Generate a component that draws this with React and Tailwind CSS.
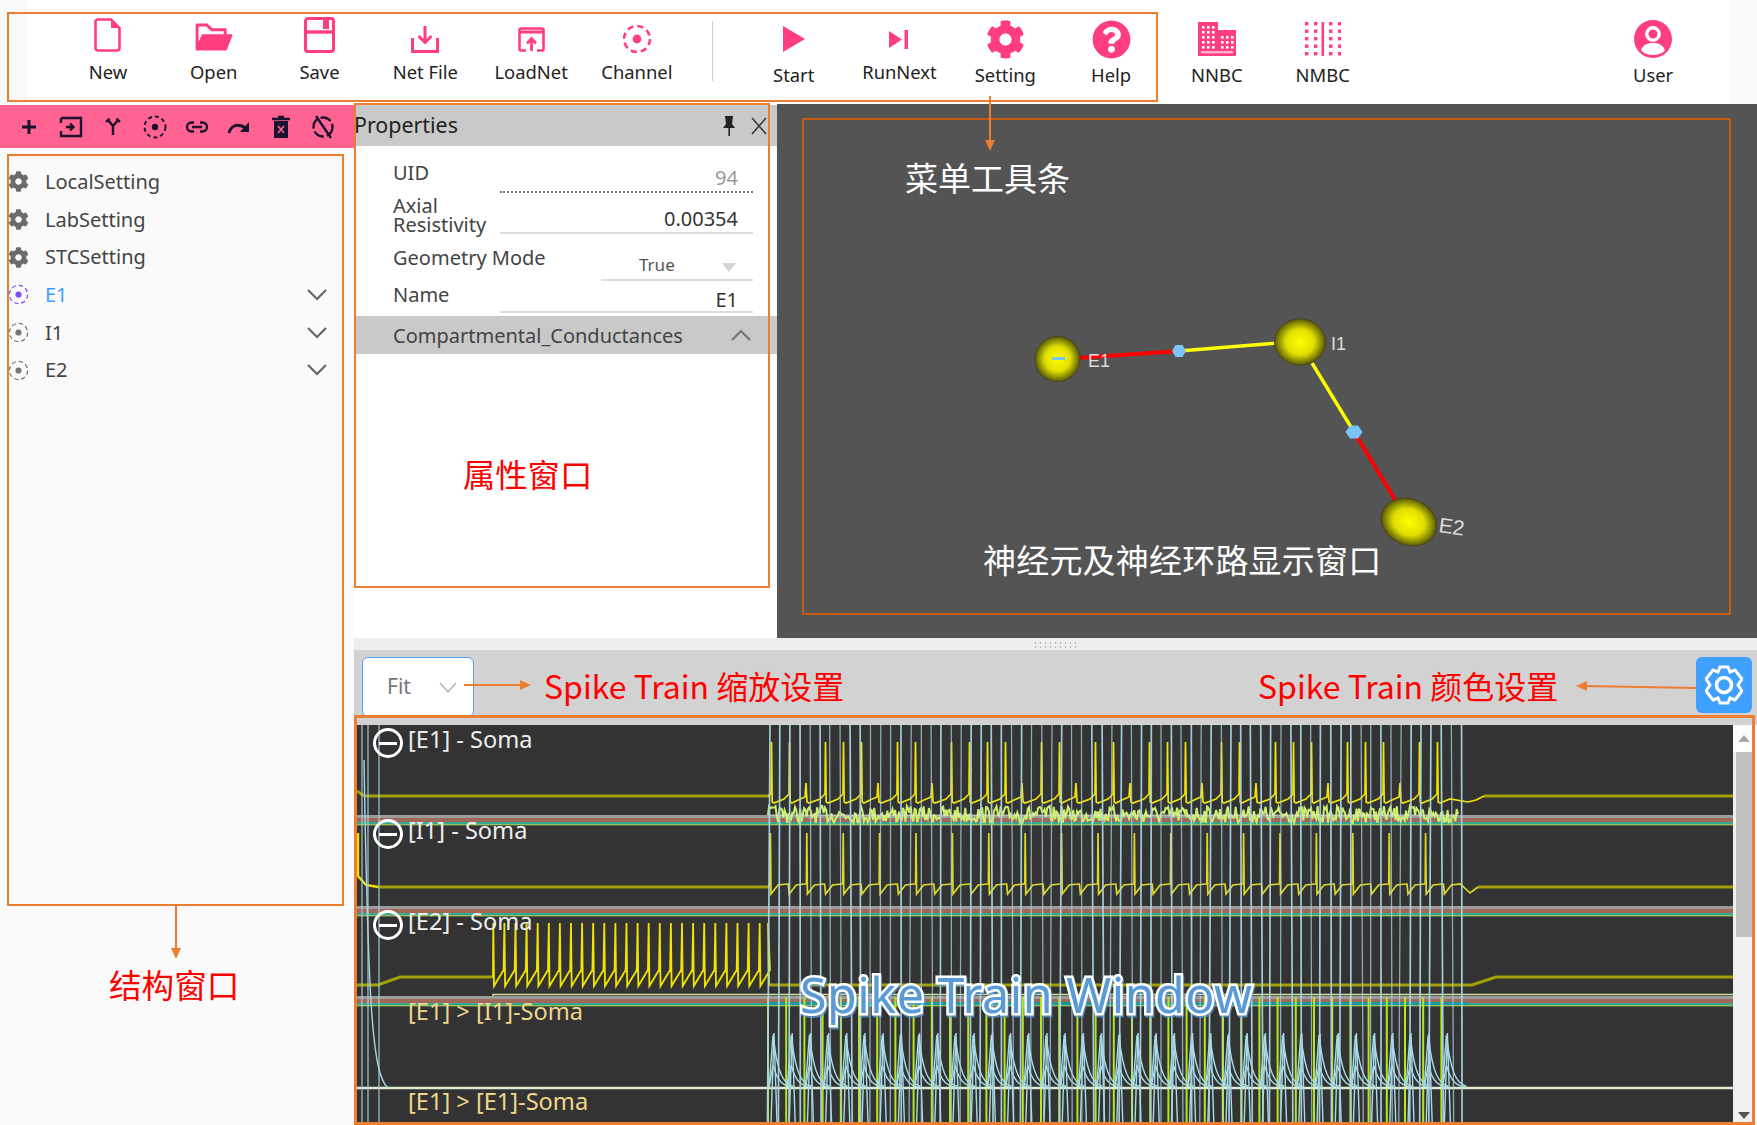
import React from "react";
import { AiFillFolderOpen } from "react-icons/ai";
import { FaCog, FaQuestionCircle } from "react-icons/fa";

const ui = "[font-family:'Noto_Sans','Noto_Sans_CJK_SC',sans-serif]";
const cjk = "[font-family:'Noto_Sans_CJK_SC',sans-serif]";

// seeded so the picture is the same on every load
let seed = 7;
const rand = () => (seed = (seed * 16807) % 2147483647) / 2147483647;

const PINK = "#ff3d80";

const DashedTarget = ({ size = 30, color = PINK, sw = 2.6 }) => (
  <svg width={size} height={size} viewBox="0 0 30 30">
    <circle cx="15" cy="15" r="13" fill="none" stroke={color} strokeWidth={sw} strokeDasharray="6.2 4" />
    <circle cx="15" cy="15" r="4.4" fill={color} />
  </svg>
);

const NewIcon = () => (
  <svg width="27" height="34" viewBox="0 0 27 34">
    <path d="M3.5 1.5H17L25.5 10V30a2.5 2.5 0 0 1-2.5 2.5H4A2.5 2.5 0 0 1 1.5 30V3.5a2 2 0 0 1 2-2z" fill="none" stroke={PINK} strokeWidth="2.6" />
    <path d="M17 1.5V10H25.5Z" fill={PINK} />
  </svg>
);

const SaveIcon = () => (
  <svg width="31" height="36" viewBox="0 0 31 36">
    <path d="M4 1.5H27a2.5 2.5 0 0 1 2.5 2.5V32a2.5 2.5 0 0 1-2.5 2.5H4A2.5 2.5 0 0 1 1.5 32V4A2.5 2.5 0 0 1 4 1.5z" fill="none" stroke={PINK} strokeWidth="3" />
    <path d="M2 15H29" stroke={PINK} strokeWidth="3.4" />
    <path d="M19 2H25V12H19Z" fill={PINK} />
  </svg>
);

const NetFileIcon = () => (
  <svg width="28" height="27" viewBox="0 0 28 27">
    <path d="M14 0V16M7.5 10L14 16.5L20.5 10" fill="none" stroke={PINK} strokeWidth="3" />
    <path d="M1.5 12V25.5H26.5V12" fill="none" stroke={PINK} strokeWidth="3" />
  </svg>
);

const LoadNetIcon = () => (
  <svg width="27" height="25" viewBox="0 0 27 25">
    <path d="M8 23.5H3A1.5 1.5 0 0 1 1.5 22V2.5A1.5 1.5 0 0 1 3 1.5H24A1.5 1.5 0 0 1 25.5 2.5V22A1.5 1.5 0 0 1 24 23.5H19" fill="none" stroke={PINK} strokeWidth="2.6" />
    <path d="M1.5 5H25.5" stroke={PINK} strokeWidth="3" />
    <path d="M13.5 24V12M9 16.5L13.5 11.5L18 16.5" fill="none" stroke={PINK} strokeWidth="2.8" />
  </svg>
);

const StartIcon = () => (
  <svg width="22" height="26" viewBox="0 0 22 26"><path d="M0 0L22 13L0 26Z" fill={PINK} /></svg>
);

const RunNextIcon = () => (
  <svg width="20" height="19" viewBox="0 0 20 19">
    <path d="M0 1L13 9.5L0 18Z" fill={PINK} />
    <path d="M15.5 0H19V19H15.5Z" fill={PINK} />
  </svg>
);

const NnbcIcon = () => (
  <svg width="38" height="34" viewBox="0 0 38 34">
    <path d="M0 0H20V8H38V34H0Z" fill={PINK} />
    {[4, 9, 14, 19, 24].flatMap((y) =>
      [4, 9, 14].map((x) => <rect key={`a${x}${y}`} x={x} y={y} width="2.6" height="2.6" fill="#fff" />)
    )}
    {[14, 19, 24].flatMap((y) =>
      [23, 28, 33].map((x) => <rect key={`b${x}${y}`} x={x} y={y} width="2.6" height="2.6" fill="#fff" />)
    )}
    <rect x="3" y="29" width="32" height="2.4" fill="#fff" opacity="0.6" />
  </svg>
);

const NmbcIcon = () => (
  <svg width="36" height="34" viewBox="0 0 36 34">
    {[0, 7.5, 15, 22.5, 30].flatMap((y) =>
      [0, 9, 24, 33].map((x) => <rect key={`${x}-${y}`} x={x} y={y} width="3.4" height="3.4" fill={PINK} />)
    )}
    <rect x="16.5" y="0" width="2.6" height="34" fill={PINK} />
  </svg>
);

const UserIcon = () => (
  <svg width="38" height="38" viewBox="0 0 38 38">
    <circle cx="19" cy="19" r="19" fill={PINK} />
    <circle cx="19" cy="14" r="6.2" fill="none" stroke="#fff" strokeWidth="3.4" />
    <path d="M7 30.5C9.5 24 14 23 19 23S28.5 24 31 30.5C27.5 34 23 35 19 35S10.5 34 7 30.5Z" fill="#fff" />
  </svg>
);

const mainTools = [
  { label: "New", icon: <NewIcon />, iconClass: "-translate-y-1", labelClass: "-mt-1" },
  { label: "Open", icon: <AiFillFolderOpen size={42} color={PINK} />, iconClass: "-translate-y-0.5", labelClass: "-mt-1" },
  { label: "Save", icon: <SaveIcon />, iconClass: "-translate-y-1", labelClass: "-mt-1" },
  { label: "Net File", icon: <NetFileIcon />, labelClass: "-mt-1" },
  { label: "LoadNet", icon: <LoadNetIcon />, labelClass: "-mt-1" },
  { label: "Channel", icon: <DashedTarget />, labelClass: "-mt-1" },
];

const runTools = [
  { label: "Start", icon: <StartIcon /> },
  { label: "RunNext", icon: <RunNextIcon />, labelClass: "-mt-1" },
  { label: "Setting", icon: <FaCog size={39} color={PINK} /> },
  { label: "Help", icon: <FaQuestionCircle size={39} color={PINK} /> },
  { label: "NNBC", icon: <NnbcIcon /> },
  { label: "NMBC", icon: <NmbcIcon /> },
];

const ToolButton = ({ label, icon, iconClass = "", labelClass = "-mt-px" }) => (
  <div className="flex w-[105.8px] flex-col items-center pt-[14px]">
    <div className={`flex h-[50px] items-center justify-center ${iconClass}`}>{icon}</div>
    <span className={`text-[18.4px] leading-6 text-[#222] ${labelClass}`}>{label}</span>
  </div>
);

const Ink = ({ children }) => (
  <svg width="26" height="26" viewBox="0 0 26 26" fill="none" stroke="#1a1230" strokeWidth="2.4">
    {children}
  </svg>
);

const sideTools = [
  <Ink key="add"><path d="M13 6V20M6 13H20" strokeWidth="3" /></Ink>,
  <Ink key="in"><path d="M3 4H23V22H3V17M3 9V4M8 13H15M12 9.5L15.5 13L12 16.5" /></Ink>,
  <Ink key="fork"><path d="M13 21V12L8 6M13 12L18 6M6 8L9.5 4.5M20 8L16.5 4.5" /></Ink>,
  <Ink key="target"><circle cx="13" cy="13" r="10.5" strokeWidth="1.9" strokeDasharray="4 3" /><circle cx="13" cy="13" r="3.2" fill="#1a1230" stroke="none" /></Ink>,
  <Ink key="link"><path d="M10 8.5H7.5a4.5 4.5 0 0 0 0 9H10M16 8.5H18.5a4.5 4.5 0 0 1 0 9H16M8 13H18" /></Ink>,
  <Ink key="redo"><path d="M3 19C5 11 12 9 20 14" strokeWidth="2.8" /><path d="M23 8V18H14Z" fill="#1a1230" stroke="none" /></Ink>,
  <Ink key="trash"><path d="M6 7H20V24H6Z" fill="#1a1230" stroke="none" /><path d="M4 5H22M10 3H16" /><path d="M10 12L16 19M16 12L10 19" stroke="#ff6392" strokeWidth="1.6" /></Ink>,
  <Ink key="off"><circle cx="13" cy="13" r="9.5" strokeDasharray="11 3" /><path d="M6 2L21 24" /></Ink>,
];

const Chevron = ({ up = false, color = "#666" }) => (
  <svg width="20" height="12" viewBox="0 0 20 12" fill="none" stroke={color} strokeWidth="2.2">
    <path d={up ? "M1 11L10 2L19 11" : "M1 1L10 10L19 1"} />
  </svg>
);

const treeItems = [
  { name: "LocalSetting", kind: "gear" },
  { name: "LabSetting", kind: "gear" },
  { name: "STCSetting", kind: "gear" },
  { name: "E1", kind: "node", active: true },
  { name: "I1", kind: "node" },
  { name: "E2", kind: "node" },
];

const Sidebar = () => (
  <aside className="flex w-[354px] shrink-0 flex-col bg-[#fafafa]">
    <div className="mt-px flex h-[43px] items-center gap-4 bg-[#ff6392] pl-4">
      {sideTools}
    </div>
    <ul className="pt-[15px]">
      {treeItems.map((item) => (
        <li key={item.name} className="flex h-[37.7px] items-center pr-[27px] pl-[7px]">
          <span className="flex w-[23px] justify-center">
            {item.kind === "gear" ? (
              <FaCog size={21} color="#6b6b6b" />
            ) : (
              <DashedTarget size={21} sw={1.8} color={item.active ? "#7c4dff" : "#777"} />
            )}
          </span>
          <span className={`ml-[15px] text-[20px] ${item.active ? "text-[#3fa0ff]" : "text-[#444]"}`}>{item.name}</span>
          {item.kind === "node" && (
            <span className="ml-auto"><Chevron /></span>
          )}
        </li>
      ))}
    </ul>
  </aside>
);

const PropRow = ({ label, children, className = "" }) => (
  <div className={`flex pl-[39px] pr-6 text-[20px] text-[#444] ${className}`}>
    <div className="w-[107px] shrink-0 leading-[19px]">{label}</div>
    {children}
  </div>
);

const PropertiesPanel = () => (
  <section className="flex w-[423px] shrink-0 flex-col bg-white">
    <div className="mt-px flex h-[41px] items-center bg-[#c9c9c9] pr-[10px]">
      <span className="text-[21.4px] text-[#222]">Properties</span>
      <svg className="ml-auto" width="14" height="22" viewBox="0 0 14 22">
        <path d="M3 1H11L10 9L13 13H8V21H6.4V13H1L4 9Z" fill="#222" />
      </svg>
      <svg className="ml-[15px]" width="16" height="18" viewBox="0 0 16 18" stroke="#333" strokeWidth="1.5">
        <path d="M1 1L15 17M15 1L1 17" />
      </svg>
    </div>
    <div className="flex flex-col pt-[17px]">
      <PropRow label="UID" className="h-[30px]">
        <div className="flex h-[30px] flex-1 justify-end border-b-2 border-dotted border-[#777] pt-[5px] pr-[15px] leading-5 text-[#999]">94</div>
      </PropRow>
      <PropRow label={<>Axial<br />Resistivity</>} className="h-[41px] pt-[3px]">
        <div className="flex h-[38px] flex-1 justify-end border-b-2 border-[#ddd] pt-[13px] pr-[15px] leading-5 text-[#333]">0.00354</div>
      </PropRow>
      <PropRow label={<span className="whitespace-nowrap">Geometry Mode</span>} className="h-[47px] pt-[14px]">
        <div className="ml-[101px] flex h-[33px] flex-1 items-end justify-between border-b-2 border-[#ddd] pr-[17px] pb-[4px] pl-[38px] text-[17px] leading-5 text-[#555]">
          <span>True</span>
          <span className="mb-[3px] h-0 w-0 border-x-[7px] border-t-[9px] border-x-transparent border-t-[#d4d4d4]" />
        </div>
      </PropRow>
      <PropRow label="Name" className="h-[32px] pt-[4px]">
        <div className="flex h-[28px] flex-1 justify-end border-b-2 border-[#ddd] pt-[5px] pr-[15px] leading-5 text-[#333]">E1</div>
      </PropRow>
      <div className="mt-[3px] flex h-[38px] items-center justify-between bg-[#c9c9c9] pl-[39px] pr-[26px] text-[20px] text-[#444]">
        <span className="translate-y-px">Compartmental_Conductances</span>
        <Chevron up color="#777" />
      </div>
    </div>
  </section>
);

const NeuronView = () => (
  <div className="min-w-0 flex-1 bg-[#545454]">
    <svg className="block h-full w-full" viewBox="777 104 980 534">
      <defs>
        <radialGradient id="soma">
          <stop offset="0" stopColor="#ffff00" />
          <stop offset="0.55" stopColor="#dede00" />
          <stop offset="0.92" stopColor="#6c6c06" />
          <stop offset="1" stopColor="#3c3c1a" />
        </radialGradient>
      </defs>
      <path d="M1078 358L1179 351" stroke="#ff0000" strokeWidth="4" />
      <path d="M1179 351L1278 343" stroke="#ffff00" strokeWidth="3.4" />
      <path d="M1312 363L1354 432" stroke="#ffff00" strokeWidth="3.4" />
      <path d="M1354 432L1397 503" stroke="#ff0000" strokeWidth="4" />
      <circle cx="1057.5" cy="359" r="23" fill="url(#soma)" />
      <ellipse cx="1300" cy="342" rx="26" ry="23.5" fill="url(#soma)" />
      <ellipse cx="1409" cy="522" rx="29" ry="23.5" transform="rotate(22 1409 522)" fill="url(#soma)" />
      <path d="M1052 358.5H1065" stroke="#7cc4f8" strokeWidth="3" />
      <path d="M1172 351L1175.5 345H1182.5L1186 351L1182.5 357H1175.5Z" fill="#7cc4f8" />
      <path d="M1345.5 432L1350 425.5H1358L1362.5 432L1358 438.5H1350Z" fill="#7cc4f8" />
      <g fill="#dcdcdc" fontFamily="'Liberation Sans', sans-serif" fontSize="18">
        <text x="1088" y="367">E1</text>
        <text x="1331" y="350">I1</text>
        <text x="1438" y="532" fontSize="21" transform="rotate(8 1438 532)">E2</text>
      </g>
    </svg>
  </div>
);

// yellow trace with a slow ramp up to each spike
const tallGaps = [18, 36, 18, 18, 36, 18, 36, 18, 18, 18, 36, 18, 36, 18, 36, 18, 18, 36, 18, 36, 18, 18, 36, 18, 18, 36, 18, 36, 18, 18];
const e1Spikes = tallGaps.reduce((list, gap) => [...list, list[list.length - 1] + gap], [771]).filter((x) => x < 1456);

const e1Path = () => {
  let d = "M768 796";
  e1Spikes.forEach((x, i) => {
    const next = e1Spikes[i + 1] || x + 18;
    d += `L${x} 794L${x + 0.5} 742L${x + 1.2} 802L${x + 3} 803`;
    if (next - x > 24) d += `L${x + 9} 800L${x + 16} 797L${x + 17} 783L${x + 18} 802L${x + 20} 803`;
    d += `L${next - 5} 799`;
  });
  return d + "L1468 802L1476 800L1484 796";
};

const e2Path = () => {
  let d = "M493 977";
  for (let x = 493; x < 768; x += 11.1) d += `L${x + 0.3} 923L${x + 1} 986L${x + 10.6} 970`;
  return d + "L768 923L769 985";
};

const i1Path = () => {
  let d = "M768 887";
  for (let x = 770; x < 1460; x += 18.2) {
    const tall = Math.round((x - 770) / 18.2) % 2 === 0;
    d += `L${x} 884`;
    if (tall) d += `L${x + 0.4} 833L${x + 1} 894`;
    else d += `L${x + 1} 894`;
    d += `L${x + 8} 885L${x + 17} 884`;
  }
  return d + "L1470 893L1478 887";
};

const noisePath = () => {
  let d = "M768 815";
  for (let x = 769; x < 1458; x += 1.3) d += `L${x.toFixed(1)} ${(806 + rand() * 17).toFixed(1)}`;
  return d;
};

const blueLines = [];
for (let x = 770; x < 1470; x += 9.6 + rand() * 0.8) {
  blueLines.push({ x, drift: rand() * 5 - 2.5, bright: rand() > 0.5 });
}

const limeLines = [];
for (let x = 768; x < 1456; x += 18.2) limeLines.push(x);

const synapsePath = (peak) => {
  let d = "";
  limeLines.forEach((x) => {
    d += `M${x + 1} 1088L${x + 5} ${peak}`;
    for (let t = 1; t <= 10; t++) d += `L${x + 5 + t * 2} ${(1088 - (1088 - peak) * Math.exp(-t / 3)).toFixed(1)}`;
  });
  return d;
};

const fallPath = () =>
  limeLines.map((x) => `M${x + 3} 1123L${x + 6} 1033L${x + 9} 1123`).join("");

const Band = ({ y, strong = false }) => (
  <g>
    <rect x="357" y={y} width="1376" height="3" fill="#9c9c9c" />
    <rect x="357" y={y + 3} width="1376" height="4" fill="#a0685a" />
    <rect x="357" y={y + 7} width="1376" height="2" fill="#34a88e" />
    <rect x="357" y={y + 9} width="1376" height="1.4" fill="#93bd62" />
    {strong && <rect x="768" y={y + 6} width="700" height="3" fill="#169a9e" />}
  </g>
);

const rowLabels = [
  { text: "[E1] - Soma", y: "top-[0px]", toggle: true },
  { text: "[I1] - Soma", y: "top-[91px]", toggle: true },
  { text: "[E2] - Soma", y: "top-[182px]", toggle: true },
  { text: "[E1] > [I1]-Soma", y: "top-[272px]", tone: "text-[#f0d68a]" },
  { text: "[E1] > [E1]-Soma", y: "top-[362px]", tone: "text-[#f0d68a]" },
];

const SpikeChart = () => (
  <div className="relative min-w-0 flex-1 overflow-hidden bg-[#333]">
    <svg className="block h-full w-full" viewBox="357 725 1376 398" fill="none">
      <Band y={815} />
      <Band y={906} />
      <Band y={996} strong />
      <path d="M493 996V994.5H1733" stroke="#cfe0a0" strokeWidth="1.6" />
      <path d="M364 796H770M1484 796H1733M378 887H770M1478 887H1733" stroke="#a39f06" strokeWidth="3" />
      <path d="M357 985H378L400 977H493M769 985H1472L1496 977H1733" stroke="#a39f06" strokeWidth="3" />
      <path d="M358 833V876L366 885L378 887" stroke="#f2e400" strokeWidth="2.4" />
      <path d="M357 791L364 796" stroke="#a39f06" strokeWidth="3" />
      <path d={e1Path()} stroke="#f2e400" strokeWidth="1.7" />
      <path d={i1Path()} stroke="#e0d820" strokeWidth="1.7" />
      <path d={e2Path()} stroke="#f2e400" strokeWidth="1.8" />
      <path d={noisePath()} stroke="#cdee6a" strokeWidth="2" />
      <path d="M768 815H1458" stroke="#e6efe0" strokeWidth="1" opacity="0.7" />
      {limeLines.map((x) => (
        <path key={x} d={`M${x} 997V1123`} stroke="#b5e61d" strokeWidth="2" />
      ))}
      <path d={synapsePath(1035)} stroke="#a8dbe8" strokeWidth="1.4" />
      <path d={synapsePath(1065)} stroke="#a8dbe8" strokeWidth="1.4" />
      <path d="M357 1088H1733" stroke="#dcebd2" strokeWidth="2.4" />
      <path d={fallPath()} stroke="#a8dbe8" strokeWidth="1.4" />
      {blueLines.map((line) => (
        <path
          key={line.x}
          d={`M${line.x} 725L${line.x + line.drift} 1123`}
          stroke="#a9d4e2"
          strokeWidth={line.bright ? 1.7 : 1.3}
          opacity={line.bright ? 0.95 : 0.75}
        />
      ))}
      <path d="M362 725V1123M368 725V1123M379 725V1123" stroke="#a9d4e2" strokeWidth="1.3" opacity="0.85" />
      <path d="M364 760C368 1000 372 1075 388 1088" stroke="#a9d4e2" strokeWidth="1.4" />
    </svg>
    {rowLabels.map((row) => (
      <div key={row.text} className={`absolute left-[16px] ${row.y} flex h-[36px] items-center`}>
        {row.toggle ? (
          <span className="flex h-[30px] w-[30px] items-center justify-center rounded-full border-[3px] border-white">
            <span className="h-[3px] w-[18px] bg-white" />
          </span>
        ) : (
          <span className="w-[30px]" />
        )}
        <span className={`ml-[5px] -translate-y-[3px] text-[23.6px] leading-none ${row.tone || "text-[#eee]"}`}>{row.text}</span>
      </div>
    ))}
  </div>
);

const ChartScrollbar = () => (
  <div className="flex w-[21px] shrink-0 flex-col bg-[#f1f1f1]">
    <div className="flex h-[27px] items-center justify-center bg-white">
      <span className="h-0 w-0 border-x-[6px] border-b-[7px] border-x-transparent border-b-[#a8a8a8]" />
    </div>
    <div className="ml-[3px] h-[185px] bg-[#c1c1c1]" />
    <div className="mt-auto flex h-[16px] items-center justify-center">
      <span className="h-0 w-0 border-x-[6px] border-t-[7px] border-x-transparent border-t-[#555]" />
    </div>
  </div>
);

// the orange notes laid over the app screenshot
const Outline = ({ className }) => <div className={`pointer-events-none absolute border-2 ${className}`} />;
const Note = ({ className, children }) => (
  <div className={`pointer-events-none absolute whitespace-nowrap leading-none ${cjk} ${className}`}>{children}</div>
);

const Notes = () => (
  <>
    <Outline className="top-[12px] left-[7px] h-[90px] w-[1151px] border-[#ed7d31]" />
    <Outline className="top-[154px] left-[7px] h-[752px] w-[337px] border-[#ed7d31]" />
    <Outline className="top-[103px] left-[354px] h-[485px] w-[416px] border-[#ed7d31]" />
    <Outline className="top-[118px] left-[802px] h-[497px] w-[929px] border-[#c55a11]" />
    <Outline className="top-[715px] left-[354px] h-[410px] w-[1401px] border-[3px] border-[#ed7d31]" />
    <svg className="pointer-events-none absolute top-0 left-0" width="1757" height="1125" fill="none">
      <g stroke="#ed7d31" strokeWidth="2">
        <path d="M990 96V142" />
        <path d="M176 906V950" />
        <path d="M464 685H522" />
        <path d="M1696 688L1584 686" />
      </g>
      <g fill="#ed7d31">
        <path d="M985 140H995L990 151Z" />
        <path d="M171 948H181L176 959Z" />
        <path d="M520 680V690L531 685Z" />
        <path d="M1587 681V691L1576 686Z" />
      </g>
    </svg>
    <Note className="top-[161px] left-[905px] text-[33px] text-white">菜单工具条</Note>
    <Note className="top-[543px] left-[983px] text-[33px] tracking-[0.2px] text-white">神经元及神经环路显示窗口</Note>
    <Note className="top-[457px] left-[463px] text-[32.3px] text-[#ff0000]">属性窗口</Note>
    <Note className="top-[968px] left-[109px] text-[32.6px] text-[#ff0000]">结构窗口</Note>
    <Note className="top-[669px] left-[544px] text-[32px] text-[#ff0000]">Spike Train 缩放设置</Note>
    <Note className="top-[669px] left-[1258px] text-[32px] text-[#ff0000]">Spike Train 颜色设置</Note>
    <div className="pointer-events-none absolute top-[970px] left-[800px] whitespace-nowrap text-[48.4px] leading-none tracking-[0.5px] text-[#5b9bd5] [-webkit-text-stroke:5px_white] [paint-order:stroke_fill] [filter:drop-shadow(1px_2px_0_rgba(91,155,213,0.7))] [font-family:'Noto_Sans',sans-serif]">
      Spike Train Window
    </div>
  </>
);

export default function App() {
  return (
    <div className={`relative flex h-[1125px] w-[1757px] flex-col overflow-hidden bg-white ${ui}`}>
      <header className="flex h-[104px] shrink-0 items-start border-x-[27px] border-[#f9f9f9] bg-white pl-[28px]">
        {mainTools.map((tool) => <ToolButton key={tool.label} {...tool} />)}
        <div className="mt-[21px] mr-[28px] ml-[22px] h-[60px] w-px bg-[#ccc]" />
        {runTools.map((tool) => <ToolButton key={tool.label} {...tool} />)}
        <div className="mr-[24px] ml-auto">
          <ToolButton label="User" icon={<UserIcon />} />
        </div>
      </header>
      <div className="flex min-h-0 flex-1">
        <Sidebar />
        <main className="flex min-w-0 flex-1 flex-col">
          <div className="flex h-[534px] shrink-0">
            <PropertiesPanel />
            <NeuronView />
          </div>
          <div className="flex h-[12px] shrink-0 items-center justify-center bg-[#eeeeee]">
            <div className="h-[7px] w-[46px] bg-[radial-gradient(#bbb_1px,transparent_1.2px)] bg-[length:5px_4px]" />
          </div>
          <div className="flex h-[75px] shrink-0 items-start justify-between bg-[#d2d2d2] pt-[7px] pr-[5px] pl-[8px]">
            <div className="flex h-[60px] w-[112px] items-center justify-between rounded-md border border-[#4ea3ff] bg-white pr-[16px] pl-[24px] text-[21px] text-[#777]">
              <span>Fit</span>
              <svg width="18" height="11" viewBox="0 0 18 11" fill="none" stroke="#b5b5b5" strokeWidth="1.6"><path d="M1 1L9 10L17 1" /></svg>
            </div>
            <div className="flex h-[56px] w-[56px] items-center justify-center rounded-md bg-[#3fa0ff]">
              <svg width="38" height="40" viewBox="0 0 38 40" fill="none" stroke="#fff">
                <path d="M15 2H23L25 7L30 5L37 14L33 20L37 26L30 35L25 33L23 38H15L13 33L8 35L1 26L5 20L1 14L8 5L13 7Z" strokeWidth="3" />
                <circle cx="19" cy="20" r="7.5" strokeWidth="3.6" />
              </svg>
            </div>
          </div>
          <div className="flex min-h-0 flex-1 pr-[3px] pb-[2px] pl-[3px]">
            <SpikeChart />
            <ChartScrollbar />
          </div>
        </main>
      </div>
      <Notes />
    </div>
  );
}
